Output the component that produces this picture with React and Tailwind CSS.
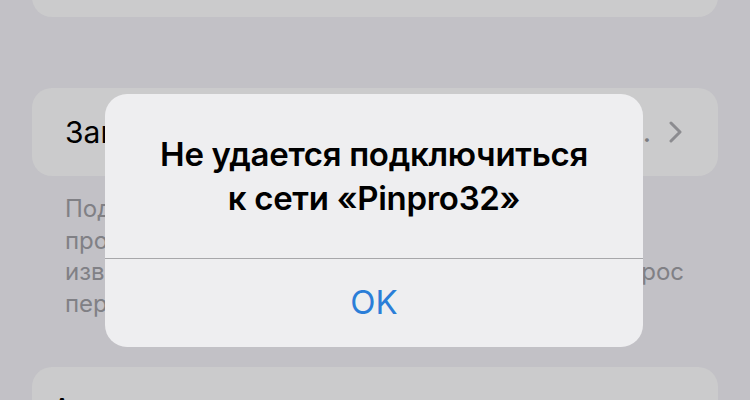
const footerLines = [
  "Подключение к этой сети использует частный",
  "проверенный адрес, поэтому устройство может",
  "известить сеть о вашей активности. Сброс",
  "периодически может потребоваться.",
];

function Alert() {
  return (
    <div className="absolute left-[105px] top-[94px] w-[538px] h-[253px] rounded-[22px] bg-[#eeeef0] flex flex-col overflow-hidden">
      <div className="h-[164px] flex items-center justify-center">
        <p className="text-center text-[33px] leading-[44px] font-semibold text-black tracking-[-0.3px]">
          Не удается подключиться
          <br />
          к сети «Pinpro32»
        </p>
      </div>
      <div className="h-px bg-[#a7a7aa]" />
      <button className="flex-1 flex items-center justify-center text-[33px] text-[#2b7ed8]">
        OK
      </button>
    </div>
  );
}

export default function App() {
  return (
    <div
      className="relative w-[750px] h-[400px] overflow-hidden bg-[#c2c1c6]"
      style={{ fontFamily: "Inter, 'Noto Sans', sans-serif" }}
    >
      <div className="flex flex-col px-[32px]">
        <div className="mt-[-60px] h-[77px] rounded-[20px] bg-[#cbcbcc]" />

        <div className="mt-[71px] h-[88px] rounded-[20px] bg-[#cbcbcc] flex items-center pl-[33px] pr-[36px]">
          <span className="text-[30px] text-black">Защита частного адреса</span>
          <span className="ml-auto text-[29px] text-[#7c7c80]">Вкл.</span>
          <svg className="ml-[18px]" width="13" height="22" viewBox="0 0 13 22" fill="none">
            <path d="M2 2l9 9-9 9" stroke="#8c8c90" strokeWidth="3" strokeLinecap="round" strokeLinejoin="round" />
          </svg>
        </div>

        <div className="pl-[33px] pt-[17px] text-[24px] leading-[31.5px] text-[#808085] whitespace-nowrap">
          {footerLines.map((line, i) => (
            <div key={i} className={i === 2 ? "flex" : ""}>
              {i === 2 ? (
                <>
                  <span>известить сеть о вашей активности.</span>
                  <span className="ml-auto pr-[34px]">Сброс</span>
                </>
              ) : (
                line
              )}
            </div>
          ))}
        </div>

        <div className="mt-[48px] h-[80px] rounded-[20px] bg-[#cbcbcc] flex items-start pt-[24px] pl-[20px]">
          <span className="text-[29px] leading-[36px] text-black">Автоподключение</span>
        </div>
      </div>

      <Alert />
    </div>
  );
}
